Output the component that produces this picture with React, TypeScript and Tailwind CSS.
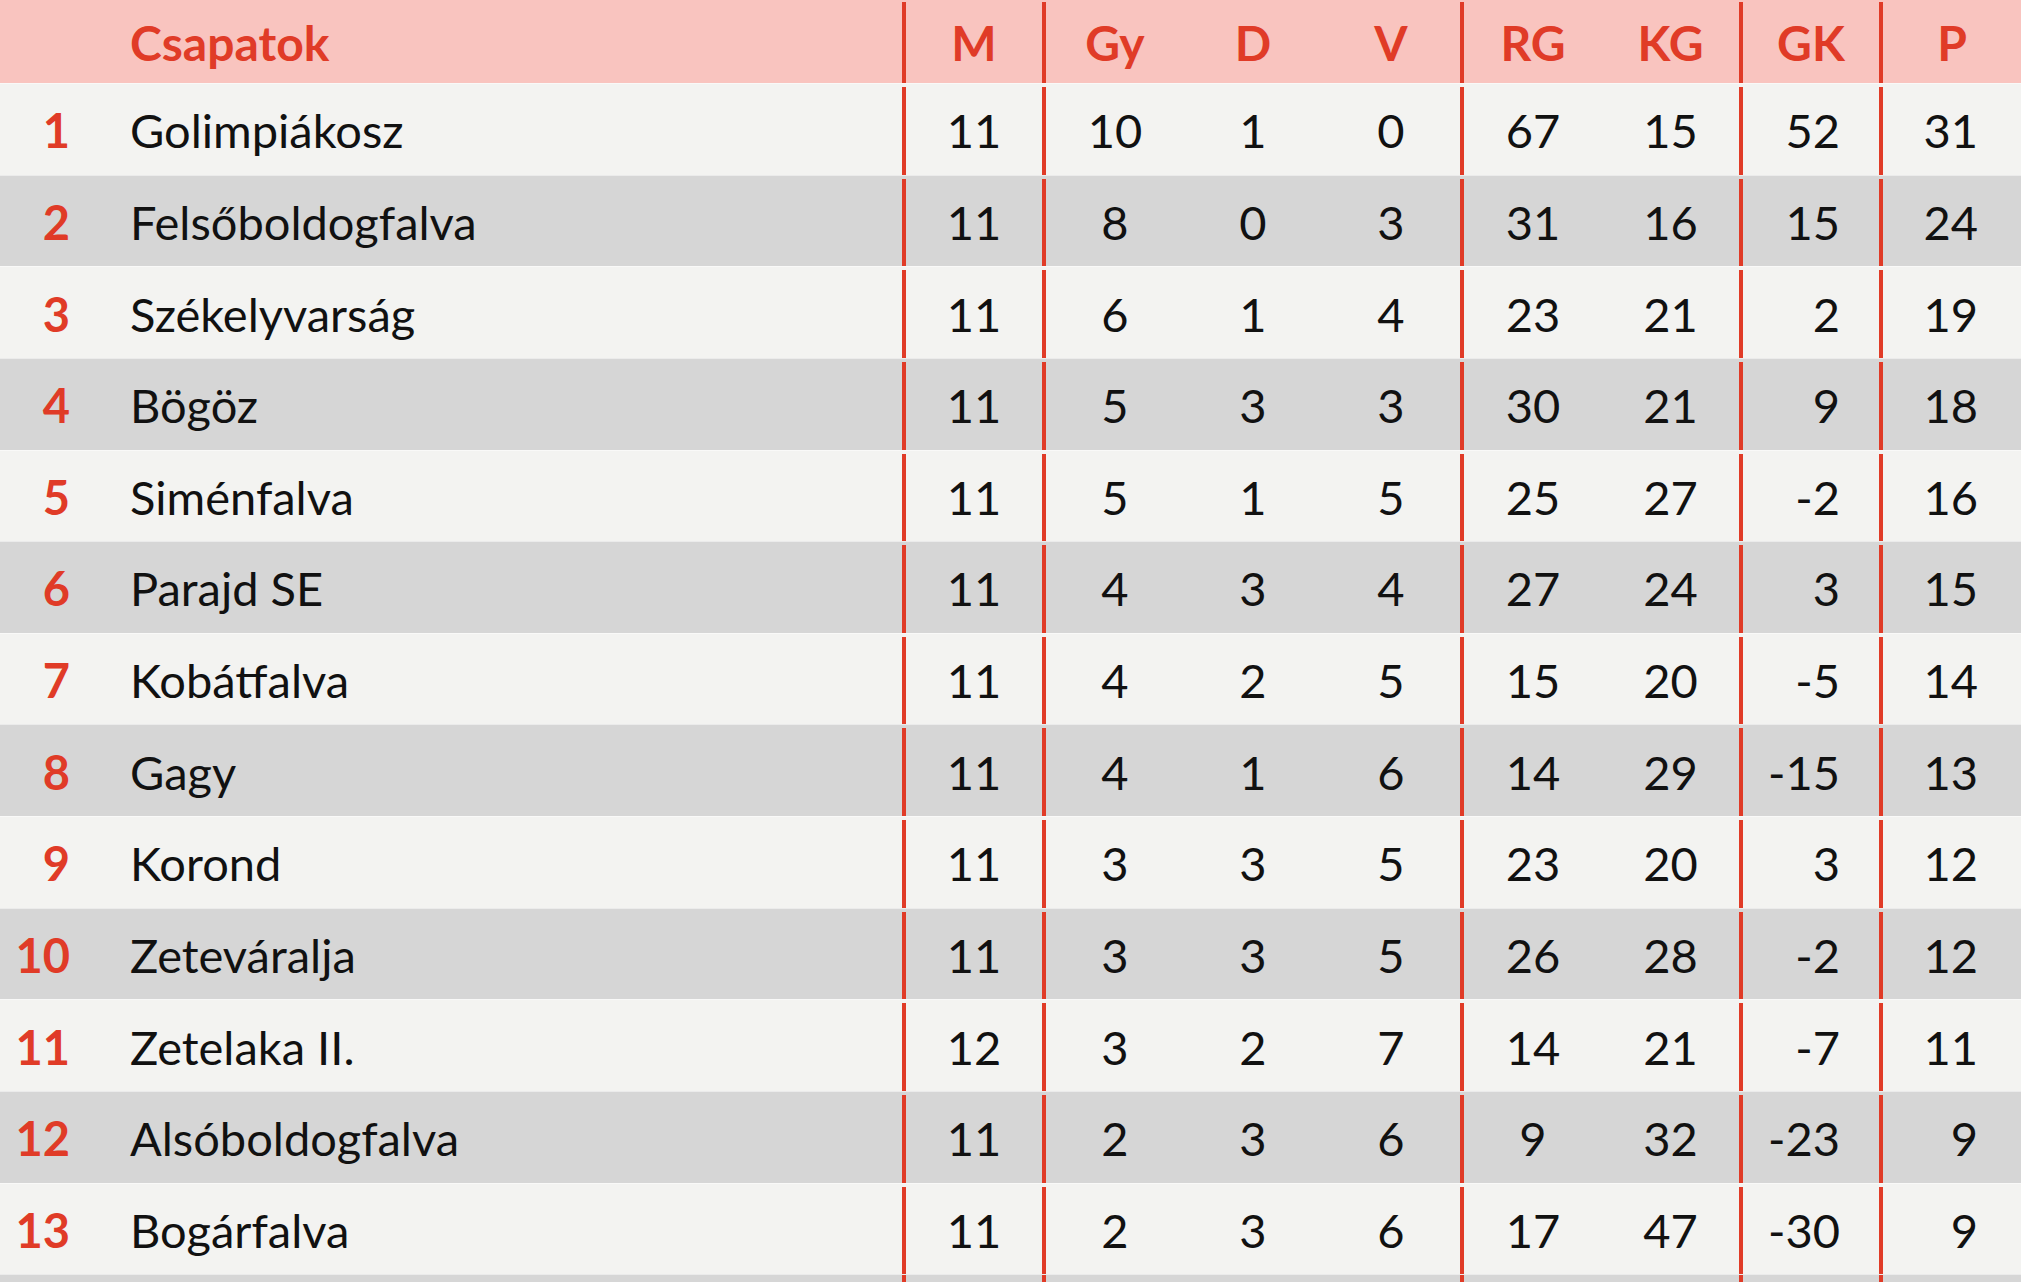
const rows: [number, string, number[]][] = [
  [1, "Golimpiákosz", [11, 10, 1, 0, 67, 15, 52, 31]],
  [2, "Felsőboldogfalva", [11, 8, 0, 3, 31, 16, 15, 24]],
  [3, "Székelyvarság", [11, 6, 1, 4, 23, 21, 2, 19]],
  [4, "Bögöz", [11, 5, 3, 3, 30, 21, 9, 18]],
  [5, "Siménfalva", [11, 5, 1, 5, 25, 27, -2, 16]],
  [6, "Parajd SE", [11, 4, 3, 4, 27, 24, 3, 15]],
  [7, "Kobátfalva", [11, 4, 2, 5, 15, 20, -5, 14]],
  [8, "Gagy", [11, 4, 1, 6, 14, 29, -15, 13]],
  [9, "Korond", [11, 3, 3, 5, 23, 20, 3, 12]],
  [10, "Zeteváralja", [11, 3, 3, 5, 26, 28, -2, 12]],
  [11, "Zetelaka II.", [12, 3, 2, 7, 14, 21, -7, 11]],
  [12, "Alsóboldogfalva", [11, 2, 3, 6, 9, 32, -23, 9]],
  [13, "Bogárfalva", [11, 2, 3, 6, 17, 47, -30, 9]],
];

const line = "border-l-4 border-[#e03b27]";

function Cells({ v, head }: { v: (string | number)[]; head?: boolean }) {
  const c = head ? "text-[#e03b27] font-bold" : "text-[#111]";
  return (
    <>
      <div className={`w-[140px] shrink-0 ${line} flex items-center justify-center ${c}`}>{v[0]}</div>
      <div className={`w-[142px] shrink-0 ${line} flex items-center justify-center ${c}`}>{v[1]}</div>
      <div className={`w-[138px] shrink-0 flex items-center justify-center ${c}`}>{v[2]}</div>
      <div className={`w-[138px] shrink-0 flex items-center justify-center ${c}`}>{v[3]}</div>
      <div className={`w-[142px] shrink-0 ${line} flex items-center justify-center ${c}`}>{v[4]}</div>
      <div className={`w-[137px] shrink-0 flex items-center justify-center ${c}`}>{v[5]}</div>
      <div
        className={`w-[140px] shrink-0 ${line} flex items-center ${head ? "justify-center" : "justify-end pr-[39px]"} ${c}`}
      >
        {v[6]}
      </div>
      <div
        className={`w-[142px] shrink-0 ${line} flex items-center ${head ? "justify-center" : "justify-end pr-[43px]"} ${c}`}
      >
        {v[7]}
      </div>
    </>
  );
}

export default function App() {
  return (
    <div className="h-[1282px] w-[2021px] overflow-hidden bg-[#f3f3f1] text-[47px] leading-none [font-family:Lato,'Liberation_Sans',sans-serif]">
      {/* header */}
      <div className="flex h-[83px] bg-[#f9c4bf] pt-[2px] text-[48px]">
        <div className="flex w-[902px] shrink-0 items-center">
          <div className="w-[130px] shrink-0" />
          <div className="font-bold text-[#e03b27]">Csapatok</div>
        </div>
        <Cells head v={["M", "Gy", "D", "V", "RG", "KG", "GK", "P"]} />
      </div>

      {rows.map(([n, name, v], i) => (
        <div
          key={n}
          className={`flex h-[91.64px] border-t border-white/50 pt-[3px] ${i % 2 ? "bg-[#d6d6d6]" : "bg-[#f3f3f1]"}`}
        >
          <div className="flex w-[902px] shrink-0 items-center">
            <div className="w-[70px] shrink-0 text-right font-bold text-[#e03b27]">{n}</div>
            <div className="w-[60px] shrink-0" />
            <div className="text-[#111]">{name}</div>
          </div>
          <Cells v={v} />
        </div>
      ))}

      <div className="flex h-[91.64px] border-t border-white/50 bg-[#d6d6d6]">
        <div className="w-[902px] shrink-0" />
        <Cells v={["", "", "", "", "", "", "", ""]} />
      </div>
    </div>
  );
}
